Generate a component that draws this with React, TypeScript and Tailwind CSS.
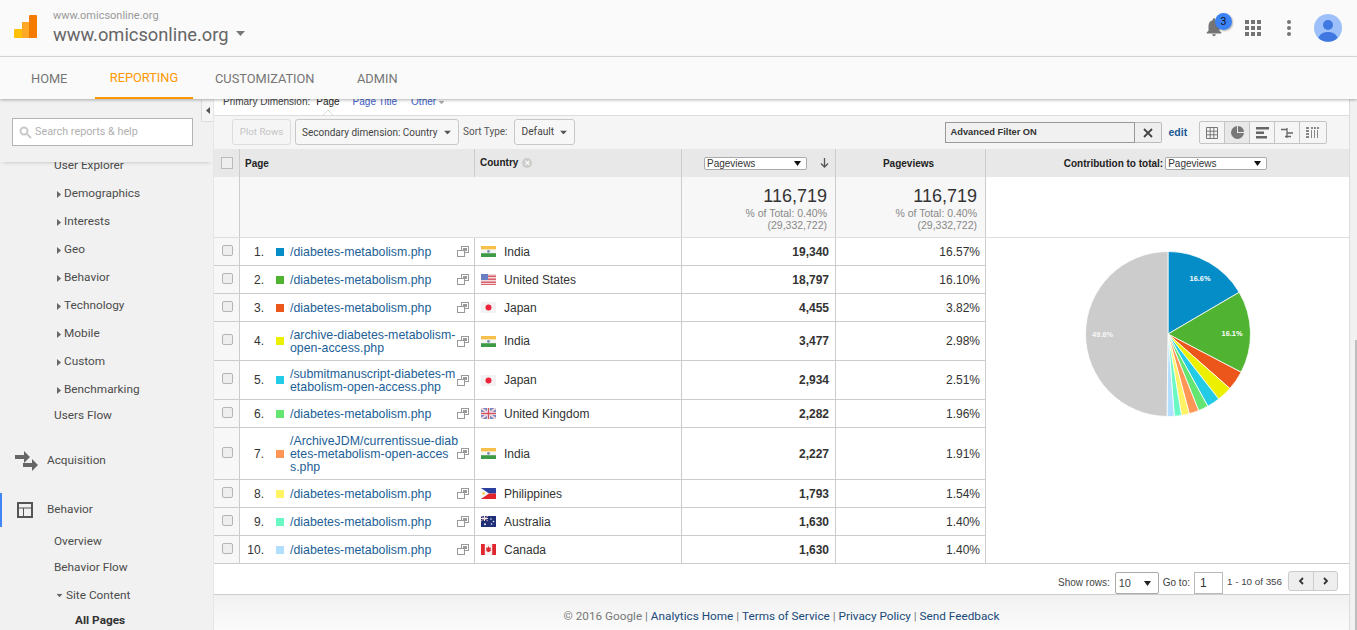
import { ReactNode } from "react";

type Flag = "in" | "us" | "jp" | "uk" | "ph" | "au" | "ca";

const rows: { page: string; color: string; flag: Flag; country: string; views: string; pct: string; h: string }[] = [
  { page: "/diabetes-metabolism.php", color: "bg-[#058dc7]", flag: "in", country: "India", views: "19,340", pct: "16.57%", h: "h-[28px]" },
  { page: "/diabetes-metabolism.php", color: "bg-[#50b432]", flag: "us", country: "United States", views: "18,797", pct: "16.10%", h: "h-[28px]" },
  { page: "/diabetes-metabolism.php", color: "bg-[#ed561b]", flag: "jp", country: "Japan", views: "4,455", pct: "3.82%", h: "h-[28px]" },
  { page: "/archive-diabetes-metabolism-\nopen-access.php", color: "bg-[#edef00]", flag: "in", country: "India", views: "3,477", pct: "2.98%", h: "h-[39px]" },
  { page: "/submitmanuscript-diabetes-m\netabolism-open-access.php", color: "bg-[#24cbe5]", flag: "jp", country: "Japan", views: "2,934", pct: "2.51%", h: "h-[39px]" },
  { page: "/diabetes-metabolism.php", color: "bg-[#64e572]", flag: "uk", country: "United Kingdom", views: "2,282", pct: "1.96%", h: "h-[28px]" },
  { page: "/ArchiveJDM/currentissue-diab\netes-metabolism-open-acces\ns.php", color: "bg-[#ff9655]", flag: "in", country: "India", views: "2,227", pct: "1.91%", h: "h-[52px]" },
  { page: "/diabetes-metabolism.php", color: "bg-[#fff263]", flag: "ph", country: "Philippines", views: "1,793", pct: "1.54%", h: "h-[28px]" },
  { page: "/diabetes-metabolism.php", color: "bg-[#6af9c4]", flag: "au", country: "Australia", views: "1,630", pct: "1.40%", h: "h-[28px]" },
  { page: "/diabetes-metabolism.php", color: "bg-[#b2deff]", flag: "ca", country: "Canada", views: "1,630", pct: "1.40%", h: "h-[28px]" },
];

const slices = [
  { v: 16.57, c: "#058dc7" },
  { v: 16.1, c: "#50b432" },
  { v: 3.82, c: "#ed561b" },
  { v: 2.98, c: "#edef00" },
  { v: 2.51, c: "#24cbe5" },
  { v: 1.96, c: "#64e572" },
  { v: 1.91, c: "#ff9655" },
  { v: 1.54, c: "#fff263" },
  { v: 1.4, c: "#6af9c4" },
  { v: 1.4, c: "#b2deff" },
  { v: 49.81, c: "#cccccc" },
];

function FlagIcon({ flag }: { flag: Flag }) {
  return (
    <svg width="15" height="11" viewBox="0 0 15 11" className="shrink-0">
      {flag === "in" && (
        <>
          <rect width="15" height="3.6" fill="#f7c04a" />
          <rect y="3.6" width="15" height="3.6" fill="#f4f4f4" />
          <rect y="7.2" width="15" height="3.8" fill="#3f9a48" />
          <circle cx="7.5" cy="5.4" r="1.4" fill="#7d8cb0" />
        </>
      )}
      {flag === "us" && (
        <>
          <rect width="15" height="11" fill="#f3d9dc" />
          <rect y="1.5" width="15" height="1.5" fill="#d9616b" />
          <rect y="4.5" width="15" height="1.5" fill="#d9616b" />
          <rect y="7.5" width="15" height="1.5" fill="#d9616b" />
          <rect y="10" width="15" height="1" fill="#d9616b" />
          <rect width="7" height="6" fill="#6a7fc4" />
        </>
      )}
      {flag === "jp" && (
        <>
          <rect width="15" height="11" fill="#f2f2f2" />
          <circle cx="7.5" cy="5.5" r="3" fill="#f0233a" />
        </>
      )}
      {flag === "uk" && (
        <>
          <rect width="15" height="11" fill="#7a88c0" />
          <path d="M0 0 15 11M15 0 0 11" stroke="#f0d6da" strokeWidth="2" />
          <path d="M7.5 0v11M0 5.5h15" stroke="#f2f2f2" strokeWidth="3" />
          <path d="M7.5 0v11M0 5.5h15" stroke="#d4525f" strokeWidth="1.4" />
        </>
      )}
      {flag === "ph" && (
        <>
          <rect width="15" height="5.5" fill="#2b3f9e" />
          <rect y="5.5" width="15" height="5.5" fill="#e0252d" />
          <path d="M0 0 8 5.5 0 11z" fill="#f5f5f5" />
          <circle cx="2.6" cy="5.5" r="1.2" fill="#f2cf3a" />
        </>
      )}
      {flag === "au" && (
        <>
          <rect width="15" height="11" fill="#1f2f78" />
          <path d="M0 0 7 5M7 0 0 5" stroke="#d9a0a8" strokeWidth="1" />
          <path d="M3.5 0v5M0 2.5h7" stroke="#e8e8e8" strokeWidth="1" />
          <circle cx="4" cy="8.3" r="1" fill="#f2f2f2" />
          <circle cx="10" cy="3" r=".8" fill="#f2f2f2" />
          <circle cx="12.5" cy="5.5" r=".8" fill="#f2f2f2" />
          <circle cx="10.5" cy="8" r=".8" fill="#f2f2f2" />
        </>
      )}
      {flag === "ca" && (
        <>
          <rect width="15" height="11" fill="#f6f0f0" />
          <rect width="3.8" height="11" fill="#e0262e" />
          <rect x="11.2" width="3.8" height="11" fill="#e0262e" />
          <path d="M7.5 2 8.6 4l1.4-.4-.5 2.4.7.4L8 8H7L4.8 6.4l.7-.4L5 3.6 6.400 4z" fill="#e0262e" />
        </>
      )}
    </svg>
  );
}

function Caret({ className = "" }: { className?: string }) {
  return (
    <svg width="9" height="5" viewBox="0 0 9 5" className={`shrink-0 ${className}`}>
      <path d="M0 0h9L4.500 5z" fill="currentColor" />
    </svg>
  );
}

function SideCaret() {
  return (
    <svg width="4" height="7" viewBox="0 0 4 7" className="shrink-0 text-[#666]">
      <path d="M0 0l4 3.500L0 7z" fill="currentColor" />
    </svg>
  );
}

function MiniSelect({ w }: { w: string }) {
  return (
    <div className={`${w} h-[13px] flex items-center justify-between bg-white border border-[#aaa] rounded-[2px] pl-[2px] pr-[5px] text-[10px] font-normal text-[#333]`}>
      <span>Pageviews</span>
      <svg width="7" height="5" viewBox="0 0 7 5" className="text-[#111]">
        <path d="M0 0h7L3.500 5z" fill="currentColor" />
      </svg>
    </div>
  );
}

function ExternalIcon() {
  return (
    <svg width="12" height="11" viewBox="0 0 12 11" className="shrink-0 text-[#999]" fill="none" stroke="currentColor">
      <rect x="4.500" y=".5" width="7" height="6" fill="#fff" />
      <rect x="6" y="2" width="4" height="3" fill="currentColor" stroke="none" />
      <rect x=".5" y="4.500" width="7" height="6" fill="#fff" />
    </svg>
  );
}

function PieChart() {
  const cx = 100;
  const cy = 100;
  const r = 82.5;
  let acc = 0;
  const total = slices.reduce((s, x) => s + x.v, 0);
  const paths = slices.map((s) => {
    const a0 = (acc / total) * Math.PI * 2;
    acc += s.v;
    const a1 = (acc / total) * Math.PI * 2;
    const large = a1 - a0 > Math.PI ? 1 : 0;
    const d = `M${cx} ${cy}L${cx + r * Math.sin(a0)} ${cy - r * Math.cos(a0)}A${r} ${r} 0 ${large} 1 ${cx + r * Math.sin(a1)} ${cy - r * Math.cos(a1)}Z`;
    return <path key={s.c} d={d} fill={s.c} stroke="#fff" strokeWidth="0.8" />;
  });
  return (
    <svg width="200" height="200" viewBox="0 0 200 200">
      {paths}
      <g fill="#fff" fontSize="7.4" fontWeight="700" fontFamily="'Liberation Sans', sans-serif" textAnchor="middle">
        <text x="132" y="46.500">16.6%</text>
        <text x="164" y="101.500">16.1%</text>
        <text x="34.500" y="102.500" fill="#f8f8f8">49.8%</text>
      </g>
    </svg>
  );
}

function ViewIcon({ children, active, w }: { children: ReactNode; active?: boolean; w: string }) {
  return (
    <div className={`${w} h-full flex items-center justify-center border-r border-[#c4c4c4] last:border-r-0 ${active ? "bg-[#e8e8e8]" : ""}`}>
      {children}
    </div>
  );
}

function SideItem({ label, caret }: { label: string; caret?: boolean }) {
  return (
    <div className="h-[28px] flex items-center pl-[54px]">
      {caret && <div className="w-[10px] pl-[3px]"><SideCaret /></div>}
      <span>{label}</span>
    </div>
  );
}

function Sidebar() {
  return (
    <aside className="w-[214px] shrink-0 bg-[#f1f1f1] overflow-hidden flex flex-col font-['Roboto',sans-serif] text-[11.800px] text-[#4c4c4c] border-r border-[#e6e6e6]">
      <div className="relative z-10 h-[63px] shrink-0 bg-[#f1f1f1] flex shadow-[0_3px_4px_-3px_rgba(0,0,0,0.25)]">
        <div className="mt-[19px] ml-[12px] w-[181px] h-[28px] bg-white border border-[#b4b4b4] flex items-center pl-[6px] text-[#b0b0b0] text-[10.800px]">
          <svg width="13" height="13" viewBox="0 0 13 13" fill="none" stroke="#c9c9c9" strokeWidth="2" className="mr-[3px]">
            <circle cx="5" cy="5" r="3.500" />
            <path d="M8 8l4 4" />
          </svg>
          <span>Search reports &amp; help</span>
        </div>
        <div className="ml-auto mr-[-1px] mt-[1px] w-[13px] h-[22px] bg-[#f5f5f5] border-l border-b border-[#ddd] flex items-center justify-center">
          <svg width="4" height="7" viewBox="0 0 4 7" className="text-[#555]">
            <path d="M4 0L0 3.500 4 7z" fill="currentColor" />
          </svg>
        </div>
      </div>
      <div className="-mt-[10px]">
        <SideItem label="User Explorer" />
        <SideItem caret label="Demographics" />
        <SideItem caret label="Interests" />
        <SideItem caret label="Geo" />
        <SideItem caret label="Behavior" />
        <SideItem caret label="Technology" />
        <SideItem caret label="Mobile" />
        <SideItem caret label="Custom" />
        <SideItem caret label="Benchmarking" />
        <div className="h-[24px] flex items-center pl-[54px]">Users Flow</div>
      </div>
      <div className="mt-[14px] h-[40px] flex items-center">
        <svg width="30" height="24" viewBox="0 0 30 24" className="ml-[14px] mr-[3px] text-[#666]" fill="currentColor">
          <path d="M1 6h9V2l6 6-6 6v-4H1z" />
          <path d="M9 14h9v-4l6 6-6 6v-4H9z" />
        </svg>
        <span>Acquisition</span>
      </div>
      <div className="mt-[13px] h-[36px] flex items-center border-l-2 border-[#4285f4]">
        <svg width="16" height="16" viewBox="0 0 16 16" fill="none" stroke="#555" strokeWidth="2" className="ml-[15px] mr-[14px]">
          <rect x="1" y="1" width="14" height="14" />
          <path d="M1 6h14M6.500 6v9" strokeWidth="1" />
        </svg>
        <span>Behavior</span>
      </div>
      <div className="mt-[2px] h-[28px] flex items-center pl-[54px]">Overview</div>
      <div className="h-[26px] flex items-center pl-[54px]">Behavior Flow</div>
      <div className="h-[33px] flex items-center pl-[55px]">
        <Caret className="mr-[2px] scale-[0.7] text-[#666]" />
        <span>Site Content</span>
      </div>
      <div className="h-[20px] flex items-center pl-[75px] font-bold text-[#333]">All Pages</div>
    </aside>
  );
}

function Toolbar() {
  return (
    <div className="h-[33px] shrink-0 bg-[#f5f5f5] flex items-start pt-[3px] text-[10.500px] text-[#444]">
      <div className="ml-[18px] w-[59px] h-[26px] border border-[#ddd] rounded-[3px] flex items-center justify-center font-['Roboto',sans-serif] text-[9.700px] text-[#c4c4c4]">Plot Rows</div>
      <div className="ml-[4px] w-[164px] h-[26px] bg-[#f7f7f7] border border-[#c8c8c8] rounded-[3px] flex items-center justify-between pl-[6px] pr-[6px] font-['Roboto',sans-serif] text-[10px] whitespace-nowrap">
        <span>Secondary dimension: Country</span>
        <Caret className="text-[#555] scale-[0.8]" />
      </div>
      <div className="ml-[4px] h-[24px] flex items-center font-['Roboto',sans-serif] text-[10px] text-[#555]">Sort Type:</div>
      <div className="ml-[6px] w-[61px] h-[26px] bg-[#f7f7f7] border border-[#c8c8c8] rounded-[3px] flex items-center justify-between pl-[7px] pr-[6px] font-['Roboto',sans-serif] text-[10.200px]">
        <span>Default</span>
        <Caret className="text-[#555] scale-[0.8]" />
      </div>
      <div className="ml-[370px] mt-[3px] w-[190px] h-[21px] bg-[#f1f1f1] border border-[#999] flex items-center pl-[5px] font-bold text-[9.300px] text-[#333] font-['Liberation_Sans',sans-serif]">
        Advanced Filter ON
      </div>
      <div className="mt-[3px] w-[27px] h-[21px] bg-[#eee] border border-[#bbb] border-l-0 rounded-r-[2px] flex items-center justify-center">
        <svg width="10" height="10" viewBox="0 0 10 10" stroke="#444" strokeWidth="1.800">
          <path d="M1 1l8 8M9 1l-8 8" />
        </svg>
      </div>
      <div className="ml-[7px] mt-[6px] font-bold text-[10.500px] text-[#1a5a96] font-['Liberation_Sans',sans-serif]">edit</div>
      <div className="ml-[12px] mt-[2px] w-[128px] h-[23px] flex border border-[#c4c4c4] rounded-[2px] bg-[#f5f5f5]">
        <ViewIcon w="w-[25px]">
          <svg width="12" height="12" viewBox="0 0 12 12" fill="none" stroke="#777">
            <path d="M.5.5h11v11H.5zM4.200.5v11M7.800.5v11M.5 4.200h11M.5 7.800h11" />
          </svg>
        </ViewIcon>
        <ViewIcon w="w-[25px]" active>
          <svg width="13" height="13" viewBox="0 0 13 13" fill="#777">
            <path d="M6 0a6.500 6.500 0 1 0 7 7H6z" />
            <path d="M7 0a6 6 0 0 1 6 6H7z" />
          </svg>
        </ViewIcon>
        <ViewIcon w="w-[25px]">
          <svg width="13" height="12" viewBox="0 0 13 12" fill="#666">
            <path d="M0 0h13v2.500H0zM0 4.500h8V7H0zM0 9h11v2.500H0z" />
          </svg>
        </ViewIcon>
        <ViewIcon w="w-[25px]">
          <svg width="12" height="12" viewBox="0 0 12 12" fill="none" stroke="#666" strokeWidth="1.300">
            <path d="M0 2.500h6M6 6h6M4 9.500h6M6 1v10" />
          </svg>
        </ViewIcon>
        <ViewIcon w="w-[26px]">
          <svg width="14" height="11" viewBox="0 0 14 11" fill="#888">
            <path d="M0 0h3v2H0zM0 3h3v2H0zM0 6h3v2H0zM0 9h3v2H0zM5 0h2v2H5zM5 3h1v8H5zM8 0h2v2H8zM8 3h1v8H8zM11 0h2v2h-2zM11 3h1v8h-1z" />
          </svg>
        </ViewIcon>
      </div>
    </div>
  );
}

function TableRow({ row, n }: { row: (typeof rows)[number]; n: number }) {
  return (
    <div className={`${row.h} flex border-b border-[#ccc] text-[12px] text-[#333]`}>
      <div className="w-[26px] shrink-0 bg-[#f7f7f7] border-r border-[#ccc] flex items-center pl-[8px]">
        <div className="w-[11px] h-[11px] -mt-[3px] rounded-[2px] bg-[#eee] border border-[#b4b4b4]" />
      </div>
      <div className="w-[235px] shrink-0 border-r border-[#ccc] flex items-center">
        <span className="w-[24px] text-right">{n}.</span>
        <span className={`${row.color} w-[8px] h-[8px] ml-[12px] shrink-0`} />
        <span className="ml-[6px] pt-[1px] w-[167px] shrink-0 text-[12.350px] text-[#235f97] leading-[13px] whitespace-pre">{row.page}</span>
        <ExternalIcon />
      </div>
      <div className="w-[207px] shrink-0 border-r border-[#ccc] flex items-center pl-[6px]">
        <FlagIcon flag={row.flag} />
        <span className="ml-[8px]">{row.country}</span>
      </div>
      <div className="w-[154px] shrink-0 border-r border-[#ccc] flex items-center justify-end pr-[6px] font-bold">{row.views}</div>
      <div className="w-[150px] shrink-0 border-r border-[#ccc] flex items-center justify-end pr-[5px]">{row.pct}</div>
    </div>
  );
}

function ReportTable() {
  return (
    <div className="font-['Liberation_Sans',sans-serif]">
      <div className="h-[28px] flex bg-[#e8e8e8] text-[10px] font-bold text-[#222]">
        <div className="w-[26px] border-r border-[#ccc] flex items-center pl-[7px]">
          <div className="w-[12px] h-[12px] bg-[#eee] border border-[#bbb]" />
        </div>
        <div className="w-[235px] border-r border-[#ccc] flex items-center pl-[5px]">Page</div>
        <div className="w-[207px] border-r border-[#ccc] flex items-center pl-[5px]">
          <span className="-mt-[1px]">Country</span>
          <span className="ml-[4px] w-[10px] h-[10px] rounded-full bg-[#ccc] text-white flex items-center justify-center text-[9px] leading-none">×</span>
        </div>
        <div className="w-[154px] border-r border-[#ccc] flex items-center pl-[22px]">
          <MiniSelect w="w-[103px]" />
          <svg width="9" height="10" viewBox="0 0 9 10" fill="none" stroke="#555" strokeWidth="1.300" className="ml-[13px]">
            <path d="M4.500 0v9M1 5.500l3.500 3.500L8 5.500" />
          </svg>
        </div>
        <div className="w-[150px] border-r border-[#ccc] flex items-center justify-center pr-[4px]">Pageviews</div>
        <div className="flex-1 flex items-center justify-center font-bold pr-[4px]">
          <span className="mr-[2px]">Contribution to total:</span>
          <MiniSelect w="w-[102px]" />
        </div>
      </div>
      <div className="h-[61px] flex border-b border-[#ddd]">
        <div className="w-[26px] bg-[#f7f7f7] border-r border-[#ccc]" />
        <div className="w-[442px] bg-[#f7f7f7] border-r border-[#ccc]" />
        <div className="w-[154px] bg-[#f7f7f7] border-r border-[#ccc] pr-[8px] pt-[8px] text-right">
          <div className="text-[18px] leading-[22px] text-[#333]">116,719</div>
          <div className="text-[10.500px] leading-[12px] text-[#888]">% of Total: 0.40%<br />(29,332,722)</div>
        </div>
        <div className="w-[150px] bg-[#f7f7f7] border-r border-[#ccc] pr-[8px] pt-[8px] text-right">
          <div className="text-[18px] leading-[22px] text-[#333]">116,719</div>
          <div className="text-[10.500px] leading-[12px] text-[#888]">% of Total: 0.40%<br />(29,332,722)</div>
        </div>
        <div className="flex-1" />
      </div>
      <div className="flex">
        <div className="w-[772px] shrink-0">
          {rows.map((r, i) => (
            <TableRow key={i} row={r} n={i + 1} />
          ))}
        </div>
        <div className="flex-1 flex justify-center pl-[1px] border-b border-[#ccc]">
          <div className="-mt-[4px]">
            <PieChart />
          </div>
        </div>
      </div>
    </div>
  );
}

function Pager() {
  return (
    <div className="h-[31px] shrink-0 flex items-start justify-end pr-[11px] font-['Liberation_Sans',sans-serif] text-[10px] text-[#444] border-b border-[#ccc]">
      <span className="mt-[11px]">Show rows:</span>
      <div className="ml-[5px] mt-[8px] w-[44px] h-[22px] bg-white border border-[#aaa] rounded-[2px] flex items-center justify-between pl-[3px] pr-[7px] text-[11px]">
        <span>10</span>
        <svg width="7" height="5" viewBox="0 0 7 5"><path d="M0 0h7L3.500 5z" fill="#222" /></svg>
      </div>
      <span className="ml-[4px] mt-[11px]">Go to:</span>
      <div className="ml-[4px] mt-[8px] w-[29px] h-[22px] bg-white border border-[#bbb] flex items-center pl-[5px] text-[12px] text-[#333]">1</div>
      <span className="ml-[4px] mt-[11px] text-[9.800px]">1 - 10 of 356</span>
      <div className="ml-[6px] mt-[7px] w-[50px] h-[20px] flex border border-[#ccc] rounded-[3px] bg-[#eee]">
        <div className="w-[25px] border-r border-[#ccc] flex items-center justify-center">
          <svg width="6" height="8" viewBox="0 0 6 8" fill="none" stroke="#333" strokeWidth="1.800"><path d="M5 1L2 4l3 3" /></svg>
        </div>
        <div className="flex-1 flex items-center justify-center">
          <svg width="6" height="8" viewBox="0 0 6 8" fill="none" stroke="#333" strokeWidth="1.800"><path d="M1 1l3 3-3 3" /></svg>
        </div>
      </div>
    </div>
  );
}

export default function App() {
  return (
    <div className="w-[1357px] h-[630px] overflow-hidden flex flex-col bg-white">
      <header className="h-[57px] shrink-0 bg-[#fafafa] border-b border-[#dedede] flex items-center font-['Roboto',sans-serif]">
        <svg width="24" height="24" viewBox="0 0 24 24" className="ml-[14px] -mt-[2px]">
          <path d="M1 14h8v9H1a1 1 0 0 1-1-1v-7a1 1 0 0 1 1-1z" fill="#ffc107" />
          <path d="M8 7h8v16H8z" fill="#ffa726" />
          <path d="M15 1a1 1 0 0 1 1-1h6a1 1 0 0 1 1 1v22h-8z" fill="#f57c00" />
        </svg>
        <div className="ml-[15px]">
          <div className="text-[11px] leading-[13px] text-[#999] -mt-[1px]">www.omicsonline.org</div>
          <div className="flex items-center text-[18.300px] leading-[24px] text-[#666] mt-[1px]">
            www.omicsonline.org
            <Caret className="ml-[7px] -mt-[2px] text-[#777]" />
          </div>
        </div>
        <div className="ml-auto flex items-center text-[#757575]">
          <div className="relative w-[22px] h-[22px] -mt-[2px]">
            <svg width="22" height="22" viewBox="0 0 24 24" fill="currentColor">
              <path d="M12 22c1.100 0 2-.9 2-2h-4c0 1.100.9 2 2 2zm6-6v-5c0-3.070-1.630-5.640-4.500-6.320V4c0-.83-.67-1.500-1.500-1.500s-1.500.67-1.500 1.500v.68C7.640 5.360 6 7.920 6 11v5l-2 2v1h16v-1l-2-2z" />
            </svg>
            <span className="absolute left-[12px] -top-[3px] w-[17px] h-[17px] rounded-full bg-[#3b82f6] text-[#111] text-[10.500px] flex items-center justify-center shadow-[1px_1px_2px_rgba(0,0,0,0.3)]">3</span>
          </div>
          <svg width="16" height="16" viewBox="0 0 16 16" fill="currentColor" className="ml-[20px]">
            <path d="M0 0h4v4H0zM6 0h4v4H6zM12 0h4v4h-4zM0 6h4v4H0zM6 6h4v4H6zM12 6h4v4h-4zM0 12h4v4H0zM6 12h4v4H6zM12 12h4v4h-4z" />
          </svg>
          <svg width="4" height="16" viewBox="0 0 4 16" fill="currentColor" className="ml-[26px]">
            <circle cx="2" cy="2" r="2" />
            <circle cx="2" cy="8" r="2" />
            <circle cx="2" cy="14" r="2" />
          </svg>
          <svg width="28" height="28" viewBox="0 0 28 28" className="ml-[23px] mr-[15px]">
            <circle cx="14" cy="14" r="14" fill="#9dc0fb" />
            <circle cx="14" cy="11" r="5" fill="#3f78e0" />
            <path d="M4.500 24c1-4 5-6 9.500-6s8.500 2 9.500 6a14 14 0 0 1-19 0z" fill="#3f78e0" />
          </svg>
        </div>
      </header>

      <nav className="relative z-20 h-[42px] shrink-0 bg-[#fafafa] flex font-['Roboto',sans-serif] text-[12.800px] text-[#757575] shadow-[0_1px_3px_rgba(0,0,0,0.3)]">
        <div className="ml-[31px] w-[64px] pt-[2px] flex items-center">HOME</div>
        <div className="w-[98px] pt-[2px] flex items-center justify-center text-[#ff9800] border-b-2 border-[#ff9800]">REPORTING</div>
        <div className="ml-[22px] w-[142px] pt-[2px] flex items-center">CUSTOMIZATION</div>
        <div className="pt-[2px] flex items-center">ADMIN</div>
      </nav>

      <div className="flex-1 flex min-h-0">
        <Sidebar />
        <div className="flex-1 flex min-w-0">
          <main className="w-[1136px] shrink-0 flex flex-col overflow-hidden border-r border-[#ddd]">
            <div className="relative h-[17px] shrink-0 overflow-hidden border-b border-[#ddd] flex items-start pl-[9px] font-['Liberation_Sans',sans-serif] text-[10px] text-[#444]">
              <div className="-mt-[3px] flex items-center leading-[12px]">
                <span>Primary Dimension:</span>
                <span className="ml-[6px] text-[#222]">Page</span>
                <span className="ml-[13px] text-[#3b5cc4]">Page Title</span>
                <span className="ml-[14px] text-[#3b5cc4]">Other</span>
                <Caret className="ml-[1px] scale-[0.7] text-[#aaa]" />
              </div>
              <svg width="10" height="5" viewBox="0 0 10 5" className="absolute left-[109px] bottom-0" fill="#fff" stroke="#ddd">
                <path d="M0 5 5 0l5 5" />
              </svg>
            </div>
            <Toolbar />
            <ReportTable />
            <Pager />
            <div className="flex-1 pt-[8px] bg-gradient-to-b from-[#f1f1f1] to-[#fbfbfb] flex items-center justify-center font-['Roboto',sans-serif] text-[11.750px] text-[#777]">
              <span>© 2016 Google |&nbsp;</span>
              <span className="text-[#1a4a7a]">Analytics Home</span>
              <span>&nbsp;|&nbsp;</span>
              <span className="text-[#1a4a7a]">Terms of Service</span>
              <span>&nbsp;|&nbsp;</span>
              <span className="text-[#1a4a7a]">Privacy Policy</span>
              <span>&nbsp;|&nbsp;</span>
              <span className="text-[#1a4a7a]">Send Feedback</span>
            </div>
          </main>
          <div className="flex-1 bg-[#f1f1f1] flex justify-end">
            <div className="w-[2px] mt-[241px] bg-[#bdbdbd]" />
          </div>
        </div>
      </div>
    </div>
  );
}
